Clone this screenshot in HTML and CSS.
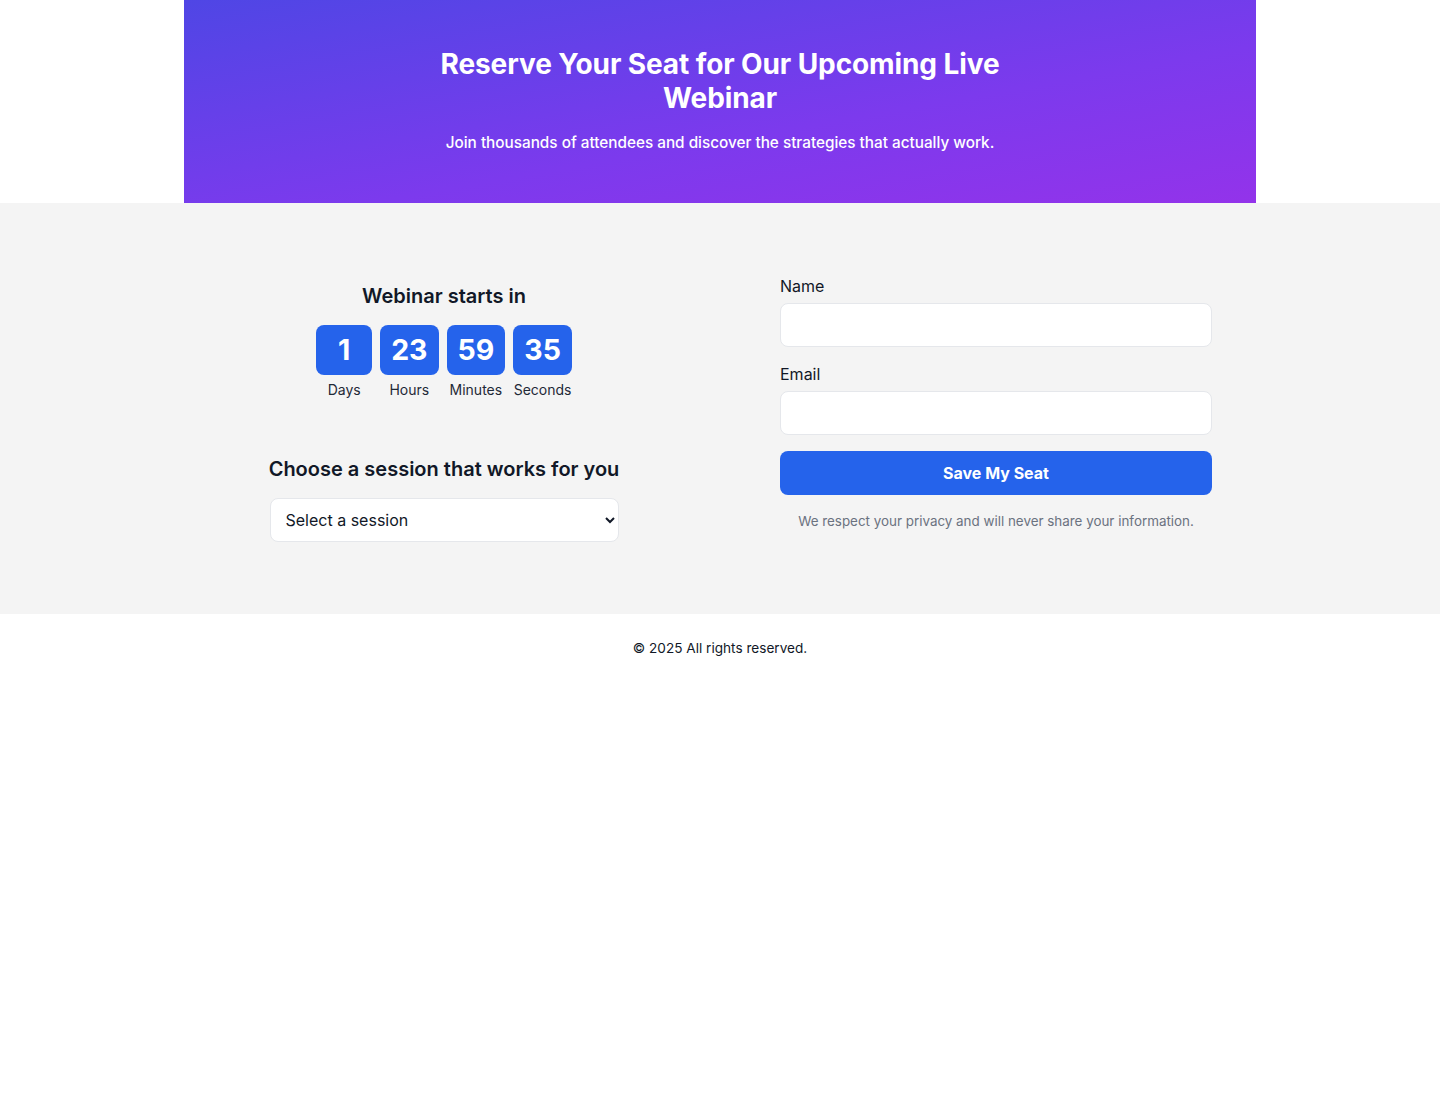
FILE: index.html
```html
<!DOCTYPE html>
<html lang="en">
<head>
<meta charset="utf-8">
<title>Reserve Your Seat</title>
<link rel="stylesheet" href="styles.css">
</head>
<body>
<header class="hero">
  <h1 class="hero-title">Reserve Your Seat for Our Upcoming Live Webinar</h1>
  <p class="hero-sub">Join thousands of attendees and discover the strategies that actually work.</p>
</header>
<main class="main">
  <div class="grid">
    <section class="left">
      <h2 class="left-title">Webinar starts in</h2>
      <div class="countdown">
        <div class="unit"><div class="box">1</div><div class="unit-label">Days</div></div>
        <div class="unit"><div class="box">23</div><div class="unit-label">Hours</div></div>
        <div class="unit"><div class="box">59</div><div class="unit-label">Minutes</div></div>
        <div class="unit"><div class="box">35</div><div class="unit-label">Seconds</div></div>
      </div>
      <h2 class="session-title">Choose a session that works for you</h2>
      <select class="session-select">
        <option>Select a session</option>
      </select>
    </section>
    <form class="form">
      <label class="field-label" for="name">Name</label>
      <input class="field" id="name" type="text">
      <label class="field-label email-label" for="email">Email</label>
      <input class="field" id="email" type="email">
      <button class="submit" type="button">Save My Seat</button>
      <p class="privacy">We respect your privacy and will never share your information.</p>
    </form>
  </div>
</main>
<footer class="footer">© 2025 All rights reserved.</footer>
</body>
</html>
```
FILE: styles.css
```css
* { box-sizing: border-box; }
body {
  margin: 0;
  font-family: Inter, "Noto Sans", sans-serif;
  color: #111827;
  background: #fff;
}
.hero {
  max-width: 1072px;
  margin: 0 auto;
  height: 203px;
  padding-top: 47px;
  text-align: center;
  color: #fff;
  background: linear-gradient(170deg, #4f46e5 0%, #7c3aed 60%, #9333ea 100%);
}
.hero-title {
  max-width: 600px;
  margin: 0 auto;
  font-size: 28px;
  line-height: 34px;
  font-weight: 700;
  letter-spacing: -0.1px;
}
.hero-sub {
  margin: 16px 0 0;
  font-size: 15.3px;
  line-height: 24px;
  font-weight: 500;
}
.main {
  background: #f4f4f4;
  padding: 71px 0 72px;
}
.grid {
  display: grid;
  grid-template-columns: 432px 432px;
  column-gap: 120px;
  justify-content: center;
}
.left {
  display: flex;
  flex-direction: column;
  align-items: center;
  padding-top: 8px;
}
.left-title, .session-title {
  margin: 0;
  font-size: 20px;
  line-height: 28px;
  font-weight: 600;
  color: #111827;
}
.countdown {
  display: flex;
  gap: 8px;
  margin-top: 15px;
}
.unit {
  display: flex;
  flex-direction: column;
  align-items: center;
}
.box {
  min-width: 56px;
  padding: 7px 11px;
  border-radius: 8px;
  background: #2563eb;
  color: #fff;
  font-size: 28.5px;
  line-height: 36px;
  font-weight: 700;
  text-align: center;
}
.unit-label {
  margin-top: 5px;
  font-size: 14px;
  line-height: 20px;
  color: #1f2937;
}
.session-title { margin-top: 55px; }
.session-select {
  margin-top: 15px;
  width: 349px;
  height: 44px;
  padding: 0 11px;
  border: 1px solid #e5e7eb;
  border-radius: 8px;
  background: #fff;
  font-family: Inter, "Noto Sans", sans-serif;
  font-size: 16px;
  color: #111827;
}
.form {
  display: flex;
  flex-direction: column;
  margin: 0;
}
.field-label {
  font-size: 16px;
  line-height: 24px;
  color: #111827;
  margin-bottom: 5px;
}
.email-label { margin-top: 15px; }
.field {
  height: 44px;
  border: 1px solid #e5e7eb;
  border-radius: 8px;
  background: #fff;
  padding: 0 12px;
  font-size: 16px;
}
.submit {
  margin-top: 16px;
  height: 44px;
  border: none;
  border-radius: 8px;
  background: #2563eb;
  color: #fff;
  font-family: Inter, "Noto Sans", sans-serif;
  font-size: 16px;
  font-weight: 700;
}
.privacy {
  margin: 16px 0 0;
  text-align: center;
  font-size: 13.4px;
  line-height: 20px;
  color: #6b7280;
}
.footer {
  padding: 24px 0;
  text-align: center;
  font-size: 13.6px;
  line-height: 20px;
  color: #111827;
}
```
